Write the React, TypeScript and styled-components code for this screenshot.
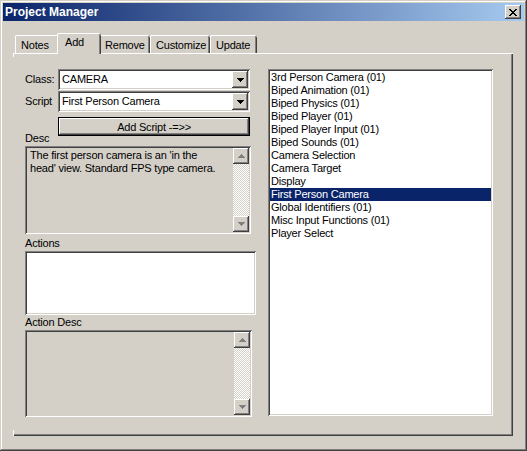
import React from "react";
import styled, { createGlobalStyle, css } from "styled-components";

const GlobalStyle = createGlobalStyle`
  html, body {
    margin: 0;
    padding: 0;
    background: #d4d0c8;
  }
  body {
    font-family: "Liberation Sans", Arial, sans-serif;
    font-size: 11px;
    letter-spacing: -0.2px;
    color: #000;
  }
`;

const raised = css`
  box-shadow: inset -1px -1px #404040, inset 1px 1px #fff,
    inset -2px -2px #808080, inset 2px 2px #d4d0c8;
`;

const sunken = css`
  box-shadow: inset 1px 1px #808080, inset -1px -1px #fff,
    inset 2px 2px #404040, inset -2px -2px #d4d0c8;
`;

const Window = styled.div`
  width: 527px;
  height: 451px;
  box-sizing: border-box;
  padding: 3px;
  background: #d4d0c8;
  display: flex;
  flex-direction: column;
  box-shadow: inset -1px -1px #404040, inset 1px 1px #d4d0c8,
    inset -2px -2px #808080, inset 2px 2px #fff;
`;

const TitleBar = styled.div`
  height: 18px;
  flex-shrink: 0;
  display: flex;
  align-items: center;
  justify-content: space-between;
  padding: 0 3px 0 2px;
  background: linear-gradient(to right, #0a246a, #a6caf0);
`;

const Title = styled.span`
  color: #fff;
  font-weight: bold;
  font-size: 12px;
  letter-spacing: 0;
`;

const CloseButton = styled.div`
  width: 16px;
  height: 14px;
  display: flex;
  align-items: center;
  justify-content: center;
  background: #d4d0c8;
  ${raised}
`;

const Body = styled.div`
  flex: 1;
  display: flex;
  flex-direction: column;
  padding: 12px 11px 12px 11px;
`;

const TabStrip = styled.div`
  height: 20px;
  display: flex;
  align-items: flex-end;
  padding-left: 1px;
`;

const Tab = styled.div<{ $active?: boolean; $width: number }>`
  position: relative;
  box-sizing: border-box;
  flex-shrink: 0;
  width: ${({ $width }) => $width}px;
  height: ${({ $active }) => ($active ? "21px" : "18px")};
  margin: ${({ $active }) => ($active ? "0 -2px -1px -2px" : "0")};
  padding: ${({ $active }) => ($active ? "3px 0 0 8px" : "4px 0 0 6px")};
  line-height: 13px;
  background: #d4d0c8;
  border-radius: 2px 2px 0 0;
  z-index: ${({ $active }) => ($active ? 1 : 0)};
  box-shadow: inset 1px 0 #fff, inset 0 1px #fff, inset -1px 0 #404040,
    inset -2px 0 #808080;
  white-space: nowrap;
`;

const Panel = styled.div`
  flex: 1;
  display: flex;
  gap: 12px;
  padding: 16px 20px 19px 11px;
  box-shadow: inset 0 1px #fff, inset -1px -1px #404040,
    inset -2px -2px #808080;
  border-left: 1px solid;
  border-image: linear-gradient(
      #fff 5px,
      #d4d0c8 5px,
      #d4d0c8 calc(100% - 7px),
      #fff calc(100% - 7px)
    )
    1;
  margin-left: -1px;
`;

const LeftColumn = styled.div`
  width: 231px;
  display: flex;
  flex-direction: column;
`;

const FieldRow = styled.div`
  display: flex;
  align-items: center;
  height: 21px;
  margin-bottom: 1px;
`;

const Label = styled.div<{ $width?: number }>`
  width: ${({ $width }) => ($width ? `${$width}px` : "auto")};
  flex-shrink: 0;
  line-height: 13px;
  height: 13px;
`;

const Combo = styled.div`
  width: 192px;
  height: 21px;
  box-sizing: border-box;
  padding: 2px;
  display: flex;
  align-items: center;
  background: #fff;
  ${sunken}
`;

const ComboText = styled.div`
  flex: 1;
  padding-left: 2px;
  line-height: 13px;
`;

const ArrowButton = styled.div<{ $h?: number }>`
  width: 16px;
  height: ${({ $h }) => $h ?? 17}px;
  flex-shrink: 0;
  display: flex;
  align-items: center;
  justify-content: center;
  background: #d4d0c8;
  ${raised}
`;

const ButtonRow = styled.div`
  display: flex;
  height: 29px;
  margin-top: 4px;
`;

const DescLabel = styled(Label)`
  align-self: flex-end;
  margin-bottom: 1px;
`;

const DefaultButton = styled.div`
  width: 192px;
  height: 19px;
  box-sizing: border-box;
  border: 1px solid #000;
  display: flex;
  align-items: center;
  justify-content: center;
  background: #d4d0c8;
  box-shadow: inset -1px -1px #404040, inset 1px 1px #fff,
    inset -2px -2px #808080;
`;

const TextBox = styled.div<{ $width: number; $height: number; $white?: boolean }>`
  width: ${({ $width }) => $width}px;
  height: ${({ $height }) => $height}px;
  box-sizing: border-box;
  padding: 2px;
  display: flex;
  background: ${({ $white }) => ($white ? "#fff" : "#d4d0c8")};
  ${sunken}
`;

const TextContent = styled.div`
  flex: 1;
  padding: 1px 12px 1px 3px;
  line-height: 13px;
`;

const ScrollBar = styled.div`
  width: 16px;
  display: flex;
  flex-direction: column;
  justify-content: space-between;
  background-color: #fff;
  background-image: repeating-conic-gradient(#d4d0c8 0 25%, #fff 0 50%);
  background-size: 2px 2px;
`;

const SectionLabel = styled(Label)`
  margin: 3px 0 1px;
`;

const ActionDescLabel = styled(Label)`
  margin: 1px 0 1px;
`;

const ListBox = styled.div`
  width: 225px;
  height: 347px;
  box-sizing: border-box;
  padding: 2px;
  background: #fff;
  ${sunken}
`;

const ListItem = styled.div<{ $selected?: boolean }>`
  height: 13px;
  line-height: 13px;
  padding-left: 1px;
  white-space: nowrap;
  background: ${({ $selected }) => ($selected ? "#0a246a" : "transparent")};
  color: ${({ $selected }) => ($selected ? "#fff" : "#000")};
`;

const DownArrow = ({ color = "#000" }: { color?: string }) => (
  <svg width="7" height="4" viewBox="0 0 7 4" shapeRendering="crispEdges">
    <path d="M0 0h7v1h-1v1h-1v1h-1v1h-1v-1h-1v-1h-1v-1h-1z" fill={color} />
  </svg>
);

const UpArrow = ({ color = "#000" }: { color?: string }) => (
  <svg width="7" height="4" viewBox="0 0 7 4" shapeRendering="crispEdges">
    <path d="M3 0h1v1h1v1h1v1h1v1h-7v-1h1v-1h1v-1h1z" fill={color} />
  </svg>
);

const CloseGlyph = () => (
  <svg width="8" height="7" viewBox="0 0 8 7" shapeRendering="crispEdges">
    <path
      d="M0 0h2v1h1v1h2v-1h1v-1h2v1h-1v1h-1v1h-1v1h1v1h1v1h1v1h-2v-1h-1v-1h-2v1h-1v1h-2v-1h1v-1h1v-1h1v-1h-1v-1h-1v-1h-1z"
      fill="#000"
    />
  </svg>
);

const Scroller = () => (
  <ScrollBar>
    <ArrowButton $h={16}>
      <UpArrow color="#808080" />
    </ArrowButton>
    <ArrowButton $h={16}>
      <DownArrow color="#808080" />
    </ArrowButton>
  </ScrollBar>
);

const scripts = [
  "3rd Person Camera (01)",
  "Biped Animation (01)",
  "Biped Physics (01)",
  "Biped Player (01)",
  "Biped Player Input (01)",
  "Biped Sounds (01)",
  "Camera Selection",
  "Camera Target",
  "Display",
  "First Person Camera",
  "Global Identifiers (01)",
  "Misc Input Functions (01)",
  "Player Select",
];

const tabs = [
  { label: "Notes", width: 44 },
  { label: "Add", width: 44 },
  { label: "Remove", width: 51 },
  { label: "Customize", width: 60 },
  { label: "Update", width: 47 },
];

export default function App() {
  return (
    <>
      <GlobalStyle />
      <Window>
        <TitleBar>
          <Title>Project Manager</Title>
          <CloseButton>
            <CloseGlyph />
          </CloseButton>
        </TitleBar>
        <Body>
          <TabStrip>
            {tabs.map((t) => (
              <Tab key={t.label} $width={t.width} $active={t.label === "Add"}>
                {t.label}
              </Tab>
            ))}
          </TabStrip>
          <Panel>
            <LeftColumn>
              <FieldRow>
                <Label $width={33}>Class:</Label>
                <Combo>
                  <ComboText>CAMERA</ComboText>
                  <ArrowButton>
                    <DownArrow />
                  </ArrowButton>
                </Combo>
              </FieldRow>
              <FieldRow>
                <Label $width={33}>Script</Label>
                <Combo>
                  <ComboText>First Person Camera</ComboText>
                  <ArrowButton>
                    <DownArrow />
                  </ArrowButton>
                </Combo>
              </FieldRow>
              <ButtonRow>
                <DescLabel $width={33}>Desc</DescLabel>
                <DefaultButton>Add Script -=&gt;&gt;</DefaultButton>
              </ButtonRow>
              <TextBox $width={226} $height={88}>
                <TextContent>
                  The first person camera is an 'in the head' view. Standard
                  FPS type camera.
                </TextContent>
                <Scroller />
              </TextBox>
              <SectionLabel>Actions</SectionLabel>
              <TextBox $width={231} $height={64} $white />
              <ActionDescLabel>Action Desc</ActionDescLabel>
              <TextBox $width={227} $height={87}>
                <TextContent />
                <Scroller />
              </TextBox>
            </LeftColumn>
            <ListBox>
              {scripts.map((s) => (
                <ListItem key={s} $selected={s === "First Person Camera"}>
                  {s}
                </ListItem>
              ))}
            </ListBox>
          </Panel>
        </Body>
      </Window>
    </>
  );
}
